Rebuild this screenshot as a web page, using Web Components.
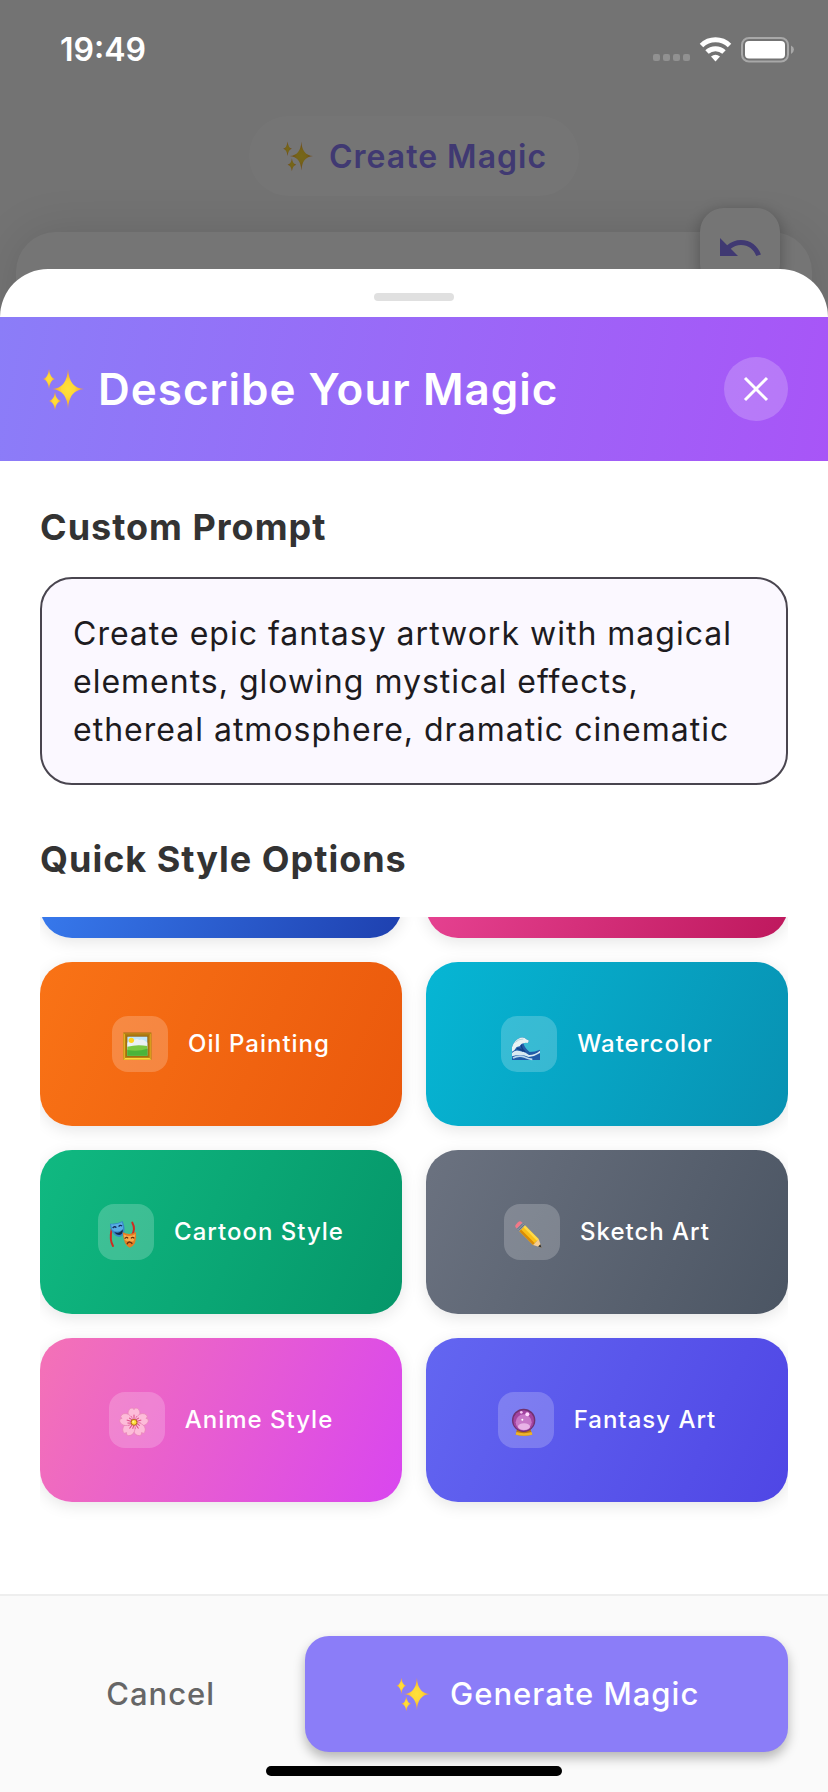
<!DOCTYPE html>
<html lang="en">
<head>
<meta charset="utf-8">
<meta name="viewport" content="width=device-width, initial-scale=1">
<title>Describe Your Magic</title>
<style>
  body { margin: 0; font-family: Inter, "Liberation Sans", sans-serif; letter-spacing: 1px; background: #fafafa; }
</style>
</head>
<body>
<magic-screen>
  <create-page slot="page"></create-page>
  <status-bar slot="status" time="19:49"></status-bar>
  <magic-sheet slot="sheet" heading="Describe Your Magic">
    <section-block heading="Custom Prompt"><prompt-field></prompt-field></section-block>
    <section-block heading="Quick Style Options" fill>
      <style-grid>
        <style-option label="Photo" from="#3b82f6" to="#1e40af" blank></style-option>
        <style-option label="Pop" from="#ec4899" to="#be185d" blank></style-option>
        <style-option icon="frame" from="#f97316" to="#ea580c">Oil Painting</style-option>
        <style-option icon="wave" from="#06b6d4" to="#0891b2">Watercolor</style-option>
        <style-option icon="masks" from="#10b981" to="#059669">Cartoon Style</style-option>
        <style-option icon="pencil" from="#6b7280" to="#4b5563">Sketch Art</style-option>
        <style-option icon="flower" from="#f472b6" to="#d946ef">Anime Style</style-option>
        <style-option icon="ball" from="#6366f1" to="#4f46e5">Fantasy Art</style-option>
      </style-grid>
    </section-block>
    <sheet-actions slot="footer"></sheet-actions>
  </magic-sheet>
</magic-screen>

<script>
const define = (name, html, setup) => {
  const template = document.createElement('template');
  template.innerHTML = html;
  customElements.define(name, class extends HTMLElement {
    constructor() {
      super();
      this.attachShadow({ mode: 'open' }).append(template.content.cloneNode(true));
    }
    connectedCallback() { if (setup) setup(this, this.shadowRoot); }
  });
};

const star = (x, y, w, h) =>
  `<path fill="url(#g)" d="M${x} ${y - h}Q${x + 1} ${y - 1} ${x + w} ${y}Q${x + 1} ${y + 1} ${x} ${y + h}Q${x - 1} ${y + 1} ${x - w} ${y}Q${x - 1} ${y - 1} ${x} ${y - h}Z"/>`;

define('sparkle-icon', `
  <style>:host { display: block; width: 36px; flex: none; } svg { display: block; width: 100%; }</style>
  <svg viewBox="-2 -2 44 44" aria-hidden="true">
    <defs><radialGradient id="g"><stop offset="0" stop-color="#ffe13a"/><stop offset=".4" stop-color="#ffd836"/><stop offset="1" stop-color="#f0952e"/></radialGradient></defs>
    ${star(26, 20, 16, 20)}${star(7, 10, 6, 10)}${star(13, 32, 6, 9)}
  </svg>`);

/* Stacks page, scrim, sheet and status bar in one grid cell. */
define('magic-screen', `
  <style>
    :host { display: grid; grid-template: minmax(0, 1fr) / minmax(0, 1fr); height: 100vh; overflow: hidden; }
    ::slotted(*), .scrim { grid-area: 1 / 1; }
    ::slotted(create-page) { isolation: isolate; z-index: 0; }
    .scrim { z-index: 1; background: rgba(0, 0, 0, .54); }
    ::slotted(status-bar), ::slotted(magic-sheet) { z-index: 2; }
    ::slotted(status-bar) { align-self: start; }
  </style>
  <slot name="page"></slot>
  <div class="scrim"></div>
  <slot name="status"></slot>
  <slot name="sheet"></slot>`);

define('create-page', `
  <style>
    :host { display: flex; flex-direction: column; align-items: center; background: #fafafa; padding-top: 116px; }
    .pill { display: flex; align-items: center; gap: 16px; box-sizing: border-box; height: 80px; padding: 0 32px; border-radius: 40px; background: #fff; color: #8b7df8; font-size: 32px; font-weight: 600; }
    .card { position: relative; align-self: stretch; flex: 1; margin: 36px 16px 0; border-radius: 40px; background: #fff; box-shadow: 0 0 48px rgba(0, 20, 10, .12); }
    button { position: absolute; top: -24px; right: 32px; width: 80px; height: 80px; padding: 16px; border: 0; border-radius: 24px; background: #fff; box-shadow: 0 4px 16px rgba(0, 0, 0, .3); }
    svg { display: block; width: 48px; height: 48px; fill: #8b7df8; }
    sparkle-icon { width: 32px; }
  </style>
  <div class="pill"><sparkle-icon></sparkle-icon><span>Create Magic</span></div>
  <div class="card">
    <button type="button" aria-label="Undo"><svg viewBox="0 0 24 24"><path d="M12.5 8c-2.65 0-5.05.99-6.9 2.6L2 7v9h9l-3.62-3.62c1.39-1.16 3.16-1.88 5.12-1.88 3.54 0 6.55 2.31 7.6 5.5l2.37-.78C21.08 11.03 17.15 8 12.5 8z"/></svg></button>
  </div>`);

define('status-bar', `
  <style>
    :host { display: flex; justify-content: space-between; align-items: center; height: 98px; padding: 0 34px 0 60px; color: #fff; font-size: 32px; font-weight: 600; letter-spacing: 0; }
    svg { display: block; width: 144px; height: 28px; }
  </style>
  <time></time>
  <svg viewBox="650 35 144 28" aria-hidden="true">
    <g fill="#919191"><rect x="653" y="54" width="7" height="7" rx="2"/><rect x="663" y="54" width="7" height="7" rx="2"/><rect x="673" y="54" width="7" height="7" rx="2"/><rect x="683" y="54" width="7" height="7" rx="2"/></g>
    <g fill="none" stroke="#fff" stroke-width="5"><path d="M701.500 45.500A20 20 0 0 1 729.500 45.500"/><path d="M707 52A12.500 12.500 0 0 1 724 52"/></g>
    <path fill="#fff" d="M711 56.500Q715.500 53 720 56.500L715.500 61.500Z"/>
    <rect x="742" y="38" width="46" height="23.500" rx="7" fill="none" stroke="#a8a8a8" stroke-width="2"/>
    <rect x="745" y="41" width="40" height="17.500" rx="4" fill="#fff"/>
    <path fill="#a8a8a8" d="M791 45.500Q794 47 794 49.500T791 54Z"/>
  </svg>`, (el, root) => { root.querySelector('time').textContent = el.getAttribute('time'); });

define('magic-sheet', `
  <style>
    :host { display: flex; flex-direction: column; margin-top: 269px; border-radius: 48px 48px 0 0; background: #fff; min-height: 0; overflow: hidden; position: relative; }
    .grip { width: 80px; height: 8px; margin: 24px auto 16px; border-radius: 4px; background: #e0e0e0; flex: none; }
    header { display: flex; align-items: center; gap: 14px; padding: 40px; background: linear-gradient(100deg, #8b7df8, #a855f7); color: #fff; }
    h1 { flex: 1; margin: 0; font-size: 44px; line-height: 56px; font-weight: 600; }
    button { width: 64px; height: 64px; padding: 16px; border: 0; border-radius: 50%; background: rgba(255, 255, 255, .2); }
    button svg { display: block; width: 32px; height: 32px; }
    sparkle-icon { width: 44px; }
    .body { flex: 1; min-height: 0; display: flex; flex-direction: column; gap: 52px; padding: 44px 40px 40px; }
    .home { position: absolute; bottom: 16px; left: 50%; width: 296px; height: 10px; margin-left: -148px; border-radius: 5px; background: #000; }
  </style>
  <div class="grip"></div>
  <header>
    <sparkle-icon></sparkle-icon><h1></h1>
    <button type="button" aria-label="Close"><svg viewBox="0 0 32 32"><path d="M5 5L27 27M27 5L5 27" stroke="#fff" stroke-width="3"/></svg></button>
  </header>
  <div class="body"><slot></slot></div>
  <slot name="footer"></slot>
  <div class="home"></div>`, (el, root) => { root.querySelector('h1').textContent = el.getAttribute('heading'); });

define('section-block', `
  <style>
    :host { display: flex; flex-direction: column; gap: 28px; }
    :host([fill]) { flex: 1; min-height: 0; gap: 36px; }
    h2 { margin: 0; font-size: 36px; line-height: 44px; font-weight: 700; color: #333; }
  </style>
  <h2></h2><slot></slot>`, (el, root) => { root.querySelector('h2').textContent = el.getAttribute('heading'); });

define('prompt-field', `
  <style>
    :host { display: block; }
    textarea { display: block; box-sizing: border-box; width: 100%; height: 208px; padding: 31px 31px 29px; border: 2px solid #49454f; border-radius: 32px; background: #fbf8ff; color: #1d1b20; font: 400 32px/48px Inter, "Liberation Sans", sans-serif; letter-spacing: 1px; resize: none; overflow: hidden; outline: 0; }
  </style>
  <textarea aria-label="Custom Prompt" rows="3">Create epic fantasy artwork with magical elements, glowing mystical effects, ethereal atmosphere, dramatic cinematic</textarea>`);

/* Opens scrolled to its end, so the first row is only partly in view. */
define('style-grid', `
  <style>
    :host { display: block; flex: 1; min-height: 0; overflow-y: auto; scrollbar-width: none; }
    .grid { display: grid; grid-template-columns: 1fr 1fr; gap: 24px; padding-bottom: 52px; }
  </style>
  <div class="grid"><slot></slot></div>`, el => requestAnimationFrame(() => { el.scrollTop = el.scrollHeight; }));

/* Tile pictures, drawn on a 168-unit square. */
const petal = a => `<g transform="rotate(${a} 75 91)"><path d="M75 90C55 78 52 58 65 49Q73 45 75 53Q77 45 85 49C98 58 95 78 75 90Z" fill="#fdbcd9" stroke="#e884b5" stroke-width="2"/><path d="M75 88V68M71 87L67 73M79 87L83 73" stroke="#dc4c86" stroke-width="3"/></g>`;
const icons = {
  frame: `<rect x="34" y="50" width="84" height="81" fill="#8a5a0c"/><path d="M34 50H118L110 58H42Z" fill="#b98316"/><path d="M34 131V50L42 58V123Z" fill="#e3ae22"/><path d="M118 131V50L110 58V123Z" fill="#d79c1c"/><path d="M34 131L42 123H110L118 131Z" fill="#ffd739"/><rect x="42" y="58" width="68" height="65" fill="none" stroke="#a8740f" stroke-width="5"/><rect x="46" y="62" width="60" height="57" fill="#bfe6fb"/><path d="M46 80Q54 72 62 78Q70 64 82 72Q92 66 106 80V98H46Z" fill="#eaf1f4"/><path d="M46 92Q76 84 106 90V119H46Z" fill="#79c943"/><path d="M46 102Q78 108 106 98V119H46Z" fill="#4bb43a"/><circle cx="58" cy="73" r="8" fill="#ffd51f"/>`,
  wave: `<path d="M33 132V94Q39 72 58 65Q70 62 76 70L84 74L80 81Q72 74 67 82Q72 98 86 108Q102 108 117 101V132Z" fill="#205ba8"/><path d="M33 94Q39 72 58 65Q70 62 76 70L84 74L80 81L74 80L67 82L61 84L56 91L47 93L40 103L33 107Z" fill="#e8f3f3"/><path d="M33 111Q42 100 56 105Q73 107 84 117Q99 118 117 104V111Q102 121 83 123Q61 112 33 121Z" fill="#d8eaf2"/><path d="M36 126Q54 116 70 123T94 130" fill="none" stroke="#b9d8ee" stroke-width="5"/><path d="M61 87Q61 99 73 108M48 98Q56 96 67 106" fill="none" stroke="#113f83" stroke-width="4"/><path d="M43 79Q52 69 67 69" fill="none" stroke="#b8d6dd" stroke-width="3"/>`,
  masks: `<path d="M41 75Q34 108 45 126M103 56Q114 76 101 94" fill="none" stroke="#cf2b20" stroke-width="6" stroke-linecap="round"/><path d="M36 59Q57 61 74 51Q85 80 75 94Q61 106 48 91Q37 78 36 59Z" fill="#3787c9"/><path d="M39 61Q57 63 72 55Q75 66 75 76Q59 88 43 78Z" fill="#58ade5"/><path d="M44 72Q50 65 55 71M62 68Q66 61 72 66" stroke="#142b55" stroke-width="4" fill="none"/><path d="M49 84Q65 91 74 76Q76 93 64 93Q54 93 49 84Z" fill="#12294e"/><path d="M74 85Q95 96 114 84Q118 124 95 131Q77 125 74 85Z" fill="#e47d23"/><path d="M77 91Q94 101 112 90Q111 105 106 112Q91 115 80 108Z" fill="#f8ad4c"/><path d="M80 104Q86 97 90 103M99 103Q104 97 109 103M87 121Q92 108 103 119" stroke="#65300d" stroke-width="4" fill="none"/>`,
  pencil: `<g transform="translate(40 57) rotate(45)"><rect x="0" y="-11" width="16" height="24" rx="8" fill="#f27888"/><rect x="10" y="-11" width="13" height="24" fill="#929bab"/><path d="M13-11V13M18-11V13" stroke="#4b5260" stroke-width="2"/><path d="M22-11H80V13H22Z" fill="#fbc018"/><path d="M22-11H80V-4H22Z" fill="#ffda4a"/><path d="M22 6H80V13H22Z" fill="#d98b08"/><path d="M80-11L104 1L80 13Z" fill="#f5cd91"/><path d="M94-4L104 1L94 6Z" fill="#333"/></g>`,
  flower: `${[0, 72, 144, 216, 288].map(petal).join('')}<circle cx="75" cy="91" r="10" fill="#b9731c"/><circle cx="75" cy="91" r="7" fill="#ffe13c"/><circle cx="73" cy="89" r="3" fill="#fff49b"/>`,
  ball: `<path d="M57 111H97L103 128Q78 134 53 128Z" fill="#b97512"/><path d="M55 120Q78 127 101 120L103 128Q78 134 53 128Z" fill="#eeb42c"/><circle cx="77" cy="85" r="35" fill="#70306f"/><circle cx="77" cy="86" r="31" fill="#a243a0"/><circle cx="77" cy="91" r="24" fill="#c777c8"/><ellipse cx="78" cy="104" rx="18" ry="10" fill="#e8b2e7"/><circle cx="88" cy="67" r="6" fill="#ffd9ff"/><circle cx="70" cy="61" r="4" fill="#f4c5f4"/><circle cx="73" cy="83" r="3" fill="#fff"/>`
};

define('style-option', `
  <style>
    :host { display: block; }
    button { display: flex; align-items: center; justify-content: center; gap: 20px; box-sizing: border-box; width: 100%; height: 164px; padding: 0; border: 0; border-radius: 32px; color: #fff; font: 500 24px/32px Inter, "Liberation Sans", sans-serif; letter-spacing: 1px; background: linear-gradient(114deg, var(--from), var(--to)); box-shadow: 0 4px 16px rgba(0, 0, 0, .1); }
    svg { display: block; width: 56px; height: 56px; border-radius: 16px; background: rgba(255, 255, 255, .2); }
  </style>
  <button type="button"><svg viewBox="0 0 168 168" aria-hidden="true"></svg><span><slot></slot></span></button>`, (el, root) => {
  el.style.setProperty('--from', el.getAttribute('from'));
  el.style.setProperty('--to', el.getAttribute('to'));
  const button = root.querySelector('button');
  if (el.hasAttribute('blank')) {
    button.setAttribute('aria-label', el.getAttribute('label'));
    button.replaceChildren();
  } else {
    root.querySelector('svg').innerHTML = icons[el.getAttribute('icon')];
  }
});

define('sheet-actions', `
  <style>
    :host { display: flex; gap: 24px; padding: 40px; border-top: 2px solid #eee; background: #fafafa; }
    button { height: 116px; padding: 0; border: 0; border-radius: 24px; font: 500 31px/40px Inter, "Liberation Sans", sans-serif; letter-spacing: 1px; }
    .cancel { flex: 1 1 0; background: none; color: #666; }
    .go { flex: 2 1 0; display: flex; align-items: center; justify-content: center; gap: 20px; background: #8b7df8; color: #fff; box-shadow: 0 6px 12px rgba(0, 0, 0, .28); }
  </style>
  <button type="button" class="cancel">Cancel</button>
  <button type="button" class="go"><sparkle-icon></sparkle-icon><span>Generate Magic</span></button>`);
</script>
</body>
</html>
